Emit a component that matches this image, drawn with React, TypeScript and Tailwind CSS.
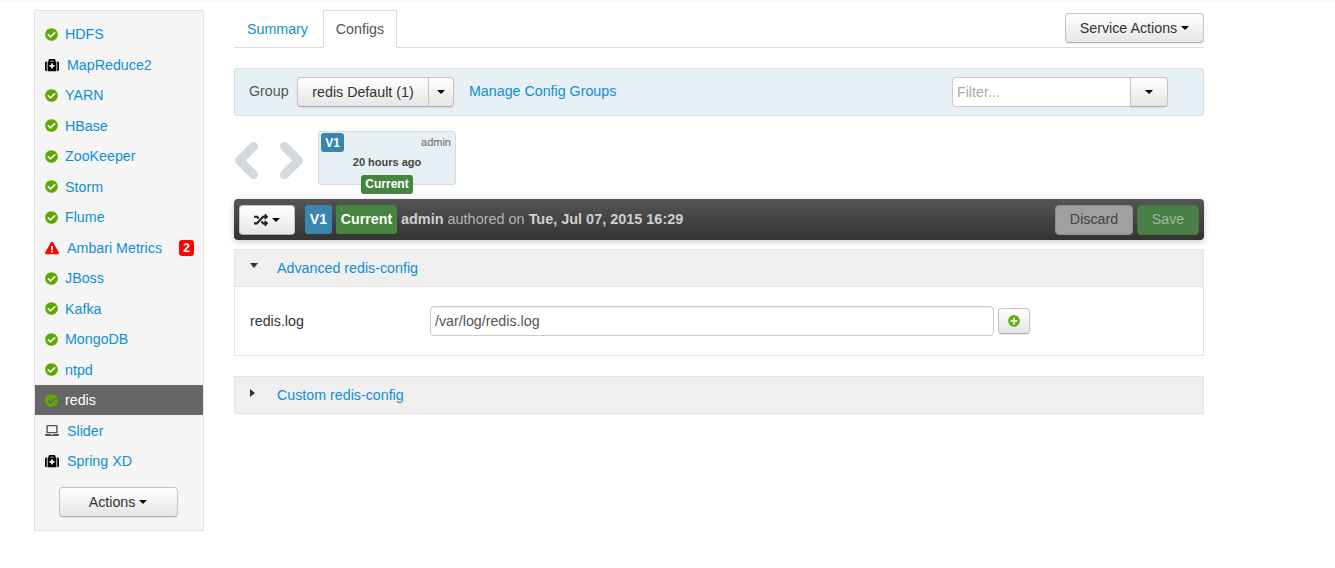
import { FaCheckCircle, FaMedkit, FaExclamationTriangle, FaLaptop, FaRandom, FaPlusCircle } from "react-icons/fa";

type Service = {
    name: string;
    icon: "ok" | "kit" | "warn" | "laptop";
    active?: boolean;
    alerts?: number;
};

const services: Service[] = [
    { name: "HDFS", icon: "ok" },
    { name: "MapReduce2", icon: "kit" },
    { name: "YARN", icon: "ok" },
    { name: "HBase", icon: "ok" },
    { name: "ZooKeeper", icon: "ok" },
    { name: "Storm", icon: "ok" },
    { name: "Flume", icon: "ok" },
    { name: "Ambari Metrics", icon: "warn", alerts: 2 },
    { name: "JBoss", icon: "ok" },
    { name: "Kafka", icon: "ok" },
    { name: "MongoDB", icon: "ok" },
    { name: "ntpd", icon: "ok" },
    { name: "redis", icon: "ok", active: true },
    { name: "Slider", icon: "laptop" },
    { name: "Spring XD", icon: "kit" },
];

const btn = "bg-gradient-to-b from-white to-[#e6e6e6] border border-[#c4c4c4] border-b-[#b0b0b0] rounded-[4px] shadow-[0_1px_1px_rgba(0,0,0,0.08)] text-[#333]";

function Caret({ className = "border-t-black" }: { className?: string }) {
    return <span className={`inline-block w-0 h-0 border-x-[4px] border-x-transparent border-t-[4px] ${className}`} />;
}

function ServiceIcon({ icon }: { icon: Service["icon"] }) {
    if (icon === "ok") return <span className="w-[12px] mr-[8px] flex justify-center"><FaCheckCircle className="text-[#5fa800] text-[13px] shrink-0" /></span>;
    if (icon === "kit") return <span className="w-[14px] mr-[8px] flex justify-center"><FaMedkit className="text-black text-[14px]" /></span>;
    if (icon === "warn") return <span className="w-[14px] mr-[8px] flex justify-center"><FaExclamationTriangle className="text-[#ff0000] text-[14px]" /></span>;
    return <span className="w-[14px] mr-[8px] flex justify-center"><FaLaptop className="text-[#555] text-[15px]" /></span>;
}

function Sidebar() {
    return (
        <div className="w-[170px] h-[521px] shrink-0 bg-[#f5f5f5] border border-[#e3e3e3] pt-[7.75px]">
            {services.map((s) => (
                <div key={s.name} className={`h-[30.5px] flex items-center pl-[10px] pr-[9px] ${s.active ? "bg-[#666666] text-white" : "text-[#0f8fd6]"}`}>
                    <ServiceIcon icon={s.icon} />
                    <span>{s.name}</span>
                    {s.alerts ? (
                        <span className="ml-auto w-[15px] h-[16px] rounded-[3px] bg-[#ff0000] text-white text-[12px] font-bold leading-[16px] text-center">{s.alerts}</span>
                    ) : null}
                </div>
            ))}
            <div className="flex justify-center pt-[11px] pr-[2px]">
                <button className={`${btn} w-[119px] h-[30px] flex items-center justify-center gap-[4px]`}>
                    Actions <Caret />
                </button>
            </div>
        </div>
    );
}

function Tabs() {
    return (
        <div className="h-[38px] flex items-start border-b border-[#ddd] relative">
            <div className="w-[89px] h-[37px] flex items-center pl-[13px] text-[#0f8fd6]">Summary</div>
            <div className="w-[74px] h-[38px] flex items-center justify-center bg-white border border-[#ddd] border-b-white text-[#555]">Configs</div>
            <button className={`${btn} ml-auto mt-[3px] w-[139px] h-[30px] flex items-center justify-center gap-[4px]`}>
                Service Actions <Caret />
            </button>
        </div>
    );
}

function GroupBar() {
    return (
        <div className="mt-[20px] h-[48px] flex items-center bg-[#e6f0f5] border border-[#d4e2ea] rounded-[3px] pl-[14px]">
            <span className="w-[48px] -mt-[2px] text-[#555]">Group</span>
            <button className={`${btn} w-[132px] h-[30px] rounded-r-none`}>redis Default (1)</button>
            <button className={`${btn} w-[25px] h-[30px] rounded-l-none border-l-0 flex items-center justify-center`}><Caret /></button>
            <span className="ml-[15px] -mt-[2px] text-[#0f8fd6]">Manage Config Groups</span>
            <div className="ml-auto mr-[35px] flex">
                <div className="w-[178px] h-[30px] bg-white border border-[#ccc] border-r-0 rounded-l-[4px] pl-[4px] leading-[28px] text-[#a9a9a9]">Filter...</div>
                <button className={`${btn} w-[38px] h-[30px] rounded-l-none flex items-center justify-center`}><Caret /></button>
            </div>
        </div>
    );
}

function Chevron({ points, className = "" }: { points: string; className?: string }) {
    return (
        <svg viewBox="0 0 23 37" className={`w-[23px] h-[37px] shrink-0 mt-[5px] ${className}`} fill="none" stroke="#d2dade" strokeWidth="9" strokeLinecap="round" strokeLinejoin="round">
            <polyline points={points} />
        </svg>
    );
}

function VersionSlider() {
    return (
        <div className="mt-[15px] h-[54px] flex items-center pl-[1px]">
            <Chevron points="18.5,4.5 4.5,18.5 18.5,32.5" />
            <Chevron points="4.5,4.5 18.5,18.5 4.5,32.5" className="ml-[22px]" />
            <div className="ml-[15px] relative w-[138px] h-[54px] bg-[#e6f0f5] border border-[#d0dde4] rounded-[3px]">
                <span className="absolute left-[2px] top-[1px] w-[23px] h-[19px] bg-[#3a85ad] rounded-[3px] text-white text-[12px] font-bold leading-[20px] text-center">V1</span>
                <span className="absolute right-[4px] top-0 text-[11px] text-[#666]">admin</span>
                <span className="absolute inset-x-0 top-[20px] text-center text-[11px] font-bold text-[#444]">20 hours ago</span>
                <span className="absolute left-[42px] top-[43px] w-[52px] h-[19px] bg-[#45853f] rounded-[3px] text-white text-[12px] font-bold leading-[18px] text-center">Current</span>
            </div>
        </div>
    );
}

function Toolbar() {
    return (
        <div className="mt-[14px] h-[41px] flex items-center px-[5px] rounded-[4px] bg-gradient-to-b from-[#555555] to-[#333333] shadow-[0_2px_6px_rgba(0,0,0,0.2)]">
            <button className={`${btn} w-[56px] h-[30px] flex items-center justify-center gap-[4px]`}>
                <FaRandom className="text-[#222] text-[14px]" /> <Caret />
            </button>
            <span className="ml-[10px] w-[27px] h-[29px] bg-[#3a85ad] rounded-[3px] text-white font-bold leading-[28px] text-center">V1</span>
            <span className="ml-[4px] w-[61px] h-[29px] bg-[#45853f] rounded-[3px] text-white font-bold leading-[28px] text-center">Current</span>
            <span className="ml-[4px] -mt-[2px] text-[14.45px] text-[#b4b4b4]"><b className="text-[#cfcfcf]">admin</b> authored on <b className="text-[#cfcfcf]">Tue, Jul 07, 2015 16:29</b></span>
            <button className="ml-auto w-[78px] h-[30px] pb-[2px] bg-[#a0a0a0] border border-[#8f8f8f] rounded-[4px] text-[#444]">Discard</button>
            <button className="ml-[4px] w-[62px] h-[30px] pb-[2px] bg-[#4a7f48] border border-[#45763f] rounded-[4px] text-[#9dba9a]">Save</button>
        </div>
    );
}

function PanelHeader({ title, open }: { title: string; open: boolean }) {
    return (
        <div className="h-[38px] flex items-center bg-[#efefef] border border-[#e3e3e3] pl-[15px]">
            <span className="w-[27px] flex -mt-[5px]">
                {open ? (
                    <span className="inline-block w-0 h-0 border-x-[4.5px] border-x-transparent border-t-[5px] border-t-[#333]" />
                ) : (
                    <span className="inline-block w-0 h-0 border-y-[4.5px] border-y-transparent border-l-[5px] border-l-[#333]" />
                )}
            </span>
            <span className="text-[#0f8fd6]">{title}</span>
        </div>
    );
}

export default function App() {
    return (
        <div className="font-['Liberation_Sans',Arial,sans-serif] text-[14.25px] leading-[20px] text-[#333] bg-white h-[568px] overflow-hidden">
            <div className="h-[3px] bg-gradient-to-b from-[#f6f6f6] to-white" />
            <div className="flex pl-[34px] pt-[7px]">
                <Sidebar />
                <div className="ml-[30px] w-[970px]">
                    <Tabs />
                    <GroupBar />
                    <VersionSlider />
                    <Toolbar />
                    <div className="mt-[9px] border-b border-x border-[#e3e3e3]">
                        <div className="-mx-[1px]"><PanelHeader title="Advanced redis-config" open /></div>
                        <div className="h-[68px] flex items-center pl-[15px]">
                            <span className="w-[180px] text-[#333]">redis.log</span>
                            <div className="w-[564px] h-[30px] border border-[#ccc] rounded-[4px] pl-[4px] leading-[28px] text-[#555] shadow-[inset_0_1px_1px_rgba(0,0,0,0.075)]">/var/log/redis.log</div>
                            <button className={`${btn} ml-[4px] w-[32px] h-[26px] flex items-center justify-center`}>
                                <FaPlusCircle className="text-[#5fb000] text-[12px]" />
                            </button>
                        </div>
                    </div>
                    <div className="mt-[20px]"><PanelHeader title="Custom redis-config" open={false} /></div>
                </div>
            </div>
        </div>
    );
}
